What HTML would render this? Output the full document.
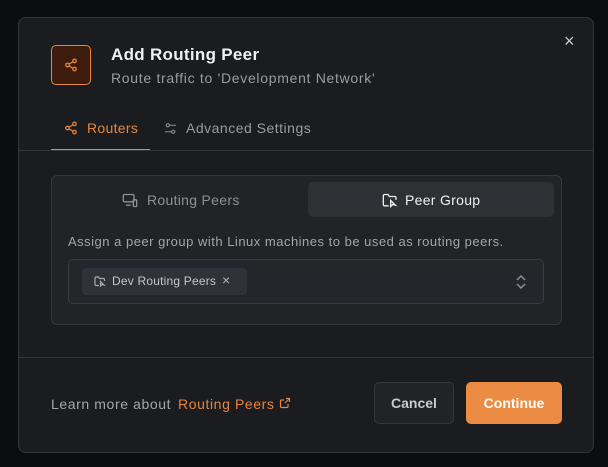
<!DOCTYPE html>
<html><head><style>
*{box-sizing:border-box;margin:0;padding:0}
body{width:608px;height:467px;background:#0c0d0f;font-family:"Liberation Sans",sans-serif;position:relative;overflow:hidden}
.m{position:absolute;left:18px;top:17px;width:576px;height:436px;background:#1b1c20;border:1px solid #34363b;border-radius:8px}
.a{position:absolute;white-space:nowrap}
</style></head><body>
<div class="m">
 <div class="a" style="left:32px;top:27px;width:40px;height:40px;border:1px solid #e5853e;background:#3e1c0d;border-radius:5px"></div>
 <svg class="a" style="left:45px;top:40px" width="14" height="14" viewBox="0 0 24 24" fill="none" stroke="#e5853e" stroke-width="2.2"><circle cx="18" cy="5" r="3"/><circle cx="6" cy="12" r="3"/><circle cx="18" cy="19" r="3"/><path d="M8.6 13.5l6.8 4M15.4 6.5l-6.8 4"/></svg>
 <div class="a" style="left:92px;top:27px;color:#f0f0f2;font-size:17px;font-weight:bold;letter-spacing:0.3px">Add Routing Peer</div>
 <div class="a" style="left:92px;top:52px;color:#9a9ca3;font-size:14px;letter-spacing:0.7px">Route traffic to 'Development Network'</div>
 <div class="a" style="left:545px;top:13px;color:#c9cacd;font-size:18px">×</div>
 <svg class="a" style="left:45px;top:103px" width="14" height="14" viewBox="0 0 24 24" fill="none" stroke="#e5853e" stroke-width="2.2"><circle cx="18" cy="5" r="3"/><circle cx="6" cy="12" r="3"/><circle cx="18" cy="19" r="3"/><path d="M8.6 13.5l6.8 4M15.4 6.5l-6.8 4"/></svg>
 <div class="a" style="left:68px;top:102px;color:#e5853e;font-size:14px;letter-spacing:0.3px">Routers</div>
 <svg class="a" style="left:145px;top:104px" width="13" height="13" viewBox="0 0 24 24" fill="none" stroke="#8e9097" stroke-width="2"><circle cx="7" cy="6" r="3"/><circle cx="17" cy="18" r="3"/><path d="M10 6h12M2 18h12"/></svg>
 <div class="a" style="left:167px;top:102px;color:#9a9ca3;font-size:14px;letter-spacing:0.5px">Advanced Settings</div>
 <div class="a" style="left:32px;top:131px;width:99px;height:2px;background:#e5853e"></div>
 <div class="a" style="left:0;top:132px;width:574px;height:1px;background:#34363b"></div>
 <div class="a" style="left:32px;top:157px;width:511px;height:150px;background:#222327;border:1px solid #35373c;border-radius:6px">
  <svg class="a" style="left:70px;top:17px" width="16" height="15" viewBox="0 0 24 22" fill="none" stroke="#8e9097" stroke-width="2"><rect x="2" y="2" width="16" height="11" rx="2"/><path d="M6 18h7"/><rect x="17" y="10" width="5" height="10" rx="1"/></svg>
  <div class="a" style="left:95px;top:16px;color:#8e9097;font-size:14px;letter-spacing:0.3px">Routing Peers</div>
  <div class="a" style="left:256px;top:6px;width:246px;height:35px;background:#2e3036;border-radius:5px"></div>
  <svg class="a" style="left:330px;top:17px" width="16" height="15" viewBox="0 0 24 22" fill="none" stroke="#eee" stroke-width="2"><path d="M10 19H4a2 2 0 0 1-2-2V4a2 2 0 0 1 2-2h5l2 3h8a2 2 0 0 1 2 2v3"/><path d="M13 11v9l3-3 4 1z"/></svg>
  <div class="a" style="left:353px;top:16px;color:#f0f0f2;font-size:14px;letter-spacing:0.3px">Peer Group</div>
  <div class="a" style="left:16px;top:58px;color:#a3a5ab;font-size:13px;letter-spacing:0.5px">Assign a peer group with Linux machines to be used as routing peers.</div>
  <div class="a" style="left:16px;top:83px;width:476px;height:45px;border:1px solid #3a3c42;border-radius:5px;background:#25262b">
   <div class="a" style="left:13px;top:8px;width:165px;height:27px;background:#30323a;border-radius:4px"></div>
   <svg class="a" style="left:25px;top:16px" width="12" height="11" viewBox="0 0 24 22" fill="none" stroke="#aaa" stroke-width="2.4"><path d="M10 19H4a2 2 0 0 1-2-2V4a2 2 0 0 1 2-2h5l2 3h8a2 2 0 0 1 2 2v3"/><path d="M13 11v9l3-3 4 1z"/></svg>
   <div class="a" style="left:43px;top:14px;color:#c5c6ca;font-size:12px;letter-spacing:0.2px">Dev Routing Peers</div>
   <div class="a" style="left:153px;top:12px;color:#b5b6ba;font-size:14px">×</div>
   <svg class="a" style="left:447px;top:15px" width="10" height="14" viewBox="0 0 10 14" fill="none" stroke="#8e9097" stroke-width="1.5"><path d="M1 5l4-4 4 4M1 9l4 4 4-4"/></svg>
  </div>
 </div>
 <div class="a" style="left:0;top:339px;width:574px;height:1px;background:#34363b"></div>
 <div class="a" style="left:32px;top:378px;color:#a3a5ab;font-size:14px;letter-spacing:0.6px">Learn more about</div>
 <div class="a" style="left:159px;top:378px;color:#e5853e;font-size:14px;letter-spacing:0.6px">Routing Peers</div>
 <svg class="a" style="left:260px;top:379px" width="12" height="12" viewBox="0 0 24 24" fill="none" stroke="#e5853e" stroke-width="2.4"><path d="M14 3h7v7M21 3l-9 9M18 14v5a2 2 0 0 1-2 2H5a2 2 0 0 1-2-2V8a2 2 0 0 1 2-2h5"/></svg>
 <div class="a" style="left:355px;top:364px;width:80px;height:42px;background:#222327;border:1px solid #34363b;border-radius:5px;color:#c9cacd;font-size:14px;font-weight:bold;text-align:center;line-height:40px">Cancel</div>
 <div class="a" style="left:447px;top:364px;width:96px;height:42px;background:#ec8b43;border-radius:5px;color:#fff;font-size:14px;font-weight:bold;text-align:center;line-height:42px">Continue</div>
</div>
</body></html>
